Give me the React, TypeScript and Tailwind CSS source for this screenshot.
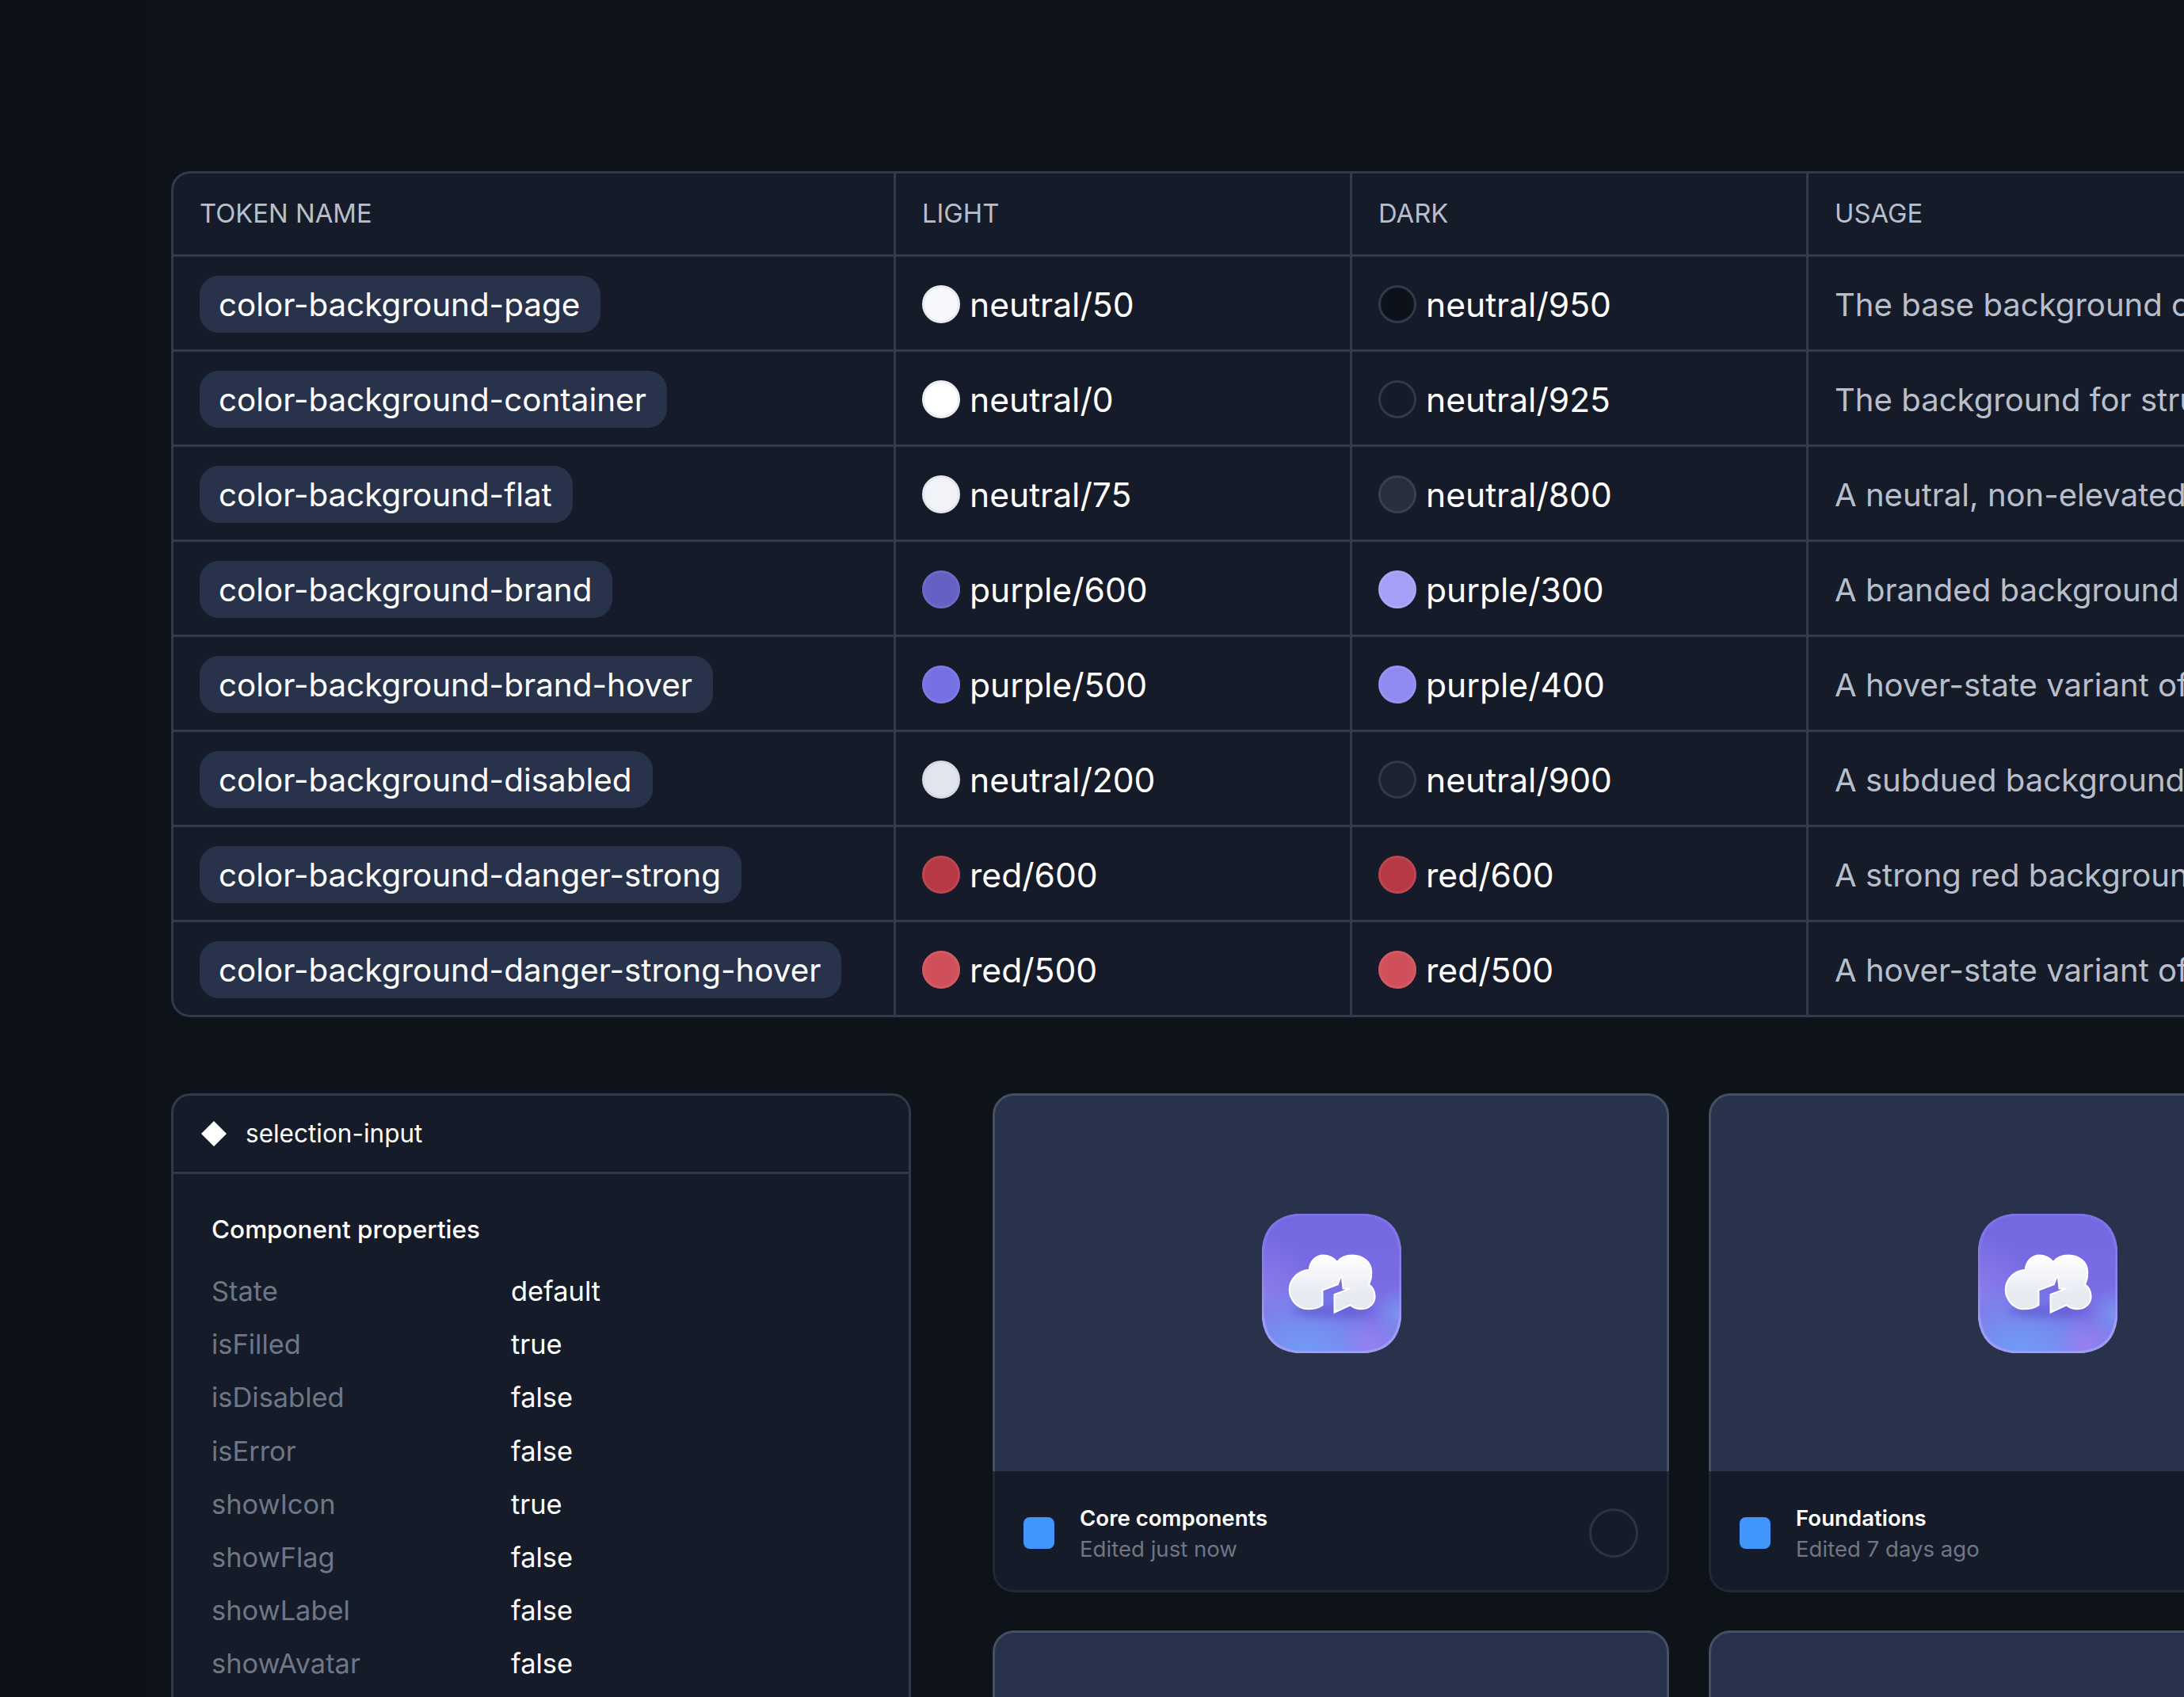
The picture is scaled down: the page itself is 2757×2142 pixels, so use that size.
import React from 'react';

const rows = [
  { token: 'color-background-page', light: 'neutral/50', lightClass: 'bg-[#f7f8fb] border-[#e9ebf1]', dark: 'neutral/950', darkClass: 'bg-[#0d1119] border-[#303a4b]', usage: 'The base background color of the page' },
  { token: 'color-background-container', light: 'neutral/0', lightClass: 'bg-white border-[#eceef3]', dark: 'neutral/925', darkClass: 'bg-[#151b28] border-[#303a4b]', usage: 'The background for structural containers' },
  { token: 'color-background-flat', light: 'neutral/75', lightClass: 'bg-[#f1f3f8] border-[#e4e7ee]', dark: 'neutral/800', darkClass: 'bg-[#272f3f] border-[#364052]', usage: 'A neutral, non-elevated surface color' },
  { token: 'color-background-brand', light: 'purple/600', lightClass: 'bg-[#6460c4] border-[#6e6ac9]', dark: 'purple/300', darkClass: 'bg-[#a3a0f5] border-[#a9a6f5]', usage: 'A branded background for emphasis' },
  { token: 'color-background-brand-hover', light: 'purple/500', lightClass: 'bg-[#7570e4] border-[#7e79e6]', dark: 'purple/400', darkClass: 'bg-[#8e8af0] border-[#9592f0]', usage: 'A hover-state variant of the brand' },
  { token: 'color-background-disabled', light: 'neutral/200', lightClass: 'bg-[#e2e5ed] border-[#d6dae3]', dark: 'neutral/900', darkClass: 'bg-[#1b2230] border-[#303a4b]', usage: 'A subdued background for disabled' },
  { token: 'color-background-danger-strong', light: 'red/600', lightClass: 'bg-[#b73945] border-[#bd4651]', dark: 'red/600', darkClass: 'bg-[#b73945] border-[#bd4651]', usage: 'A strong red background for danger' },
  { token: 'color-background-danger-strong-hover', light: 'red/500', lightClass: 'bg-[#cf4f5a] border-[#d25a64]', dark: 'red/500', darkClass: 'bg-[#cf4f5a] border-[#d25a64]', usage: 'A hover-state variant of the danger' },
];

const props = [
  ['State', 'default'],
  ['isFilled', 'true'],
  ['isDisabled', 'false'],
  ['isError', 'false'],
  ['showIcon', 'true'],
  ['showFlag', 'false'],
  ['showLabel', 'false'],
  ['showAvatar', 'false'],
];

function Swatch({ name, className }: { name: string; className: string }) {
  return (
    <div className="flex items-center gap-[12px] h-[48px]">
      <span className={`w-[48px] h-[48px] rounded-full border-[3px] ${className}`} />
      <span className="text-[42.6px] leading-[60px] pt-[2px] text-white">{name}</span>
    </div>
  );
}

function AppIcon({ id }: { id: string }) {
  const squircle = 'M260 96 L463 96 C568 96 622 150 622 256 L622 457 C622 563 568 617 463 617 L260 617 C155 617 101 563 101 457 L101 256 C101 150 155 96 260 96 Z';
  return (
    <svg viewBox="98 93 527 527" className="w-[176px] h-[176px]">
      <defs>
        <linearGradient id={`${id}-base`} x1="0" y1="0" x2="0" y2="1">
          <stop offset="0" stopColor="#7468e0" />
          <stop offset="0.7" stopColor="#7a6de5" />
          <stop offset="1" stopColor="#8088ee" />
        </linearGradient>
        <radialGradient id={`${id}-blue`} cx="0.3" cy="1" r="0.55">
          <stop offset="0" stopColor="#6f9cf5" stopOpacity="0.95" />
          <stop offset="1" stopColor="#6f9cf5" stopOpacity="0" />
        </radialGradient>
        <radialGradient id={`${id}-spot`} cx="0.78" cy="0.95" r="0.22">
          <stop offset="0" stopColor="#9a7df0" stopOpacity="0.9" />
          <stop offset="1" stopColor="#9a7df0" stopOpacity="0" />
        </radialGradient>
        <radialGradient id={`${id}-side`} cx="0.98" cy="0.72" r="0.2">
          <stop offset="0" stopColor="#7a96f0" stopOpacity="0.9" />
          <stop offset="1" stopColor="#7a96f0" stopOpacity="0" />
        </radialGradient>
        <radialGradient id={`${id}-left`} cx="0" cy="0.55" r="0.4">
          <stop offset="0" stopColor="#8f7eec" stopOpacity="0.8" />
          <stop offset="1" stopColor="#8f7eec" stopOpacity="0" />
        </radialGradient>
        <linearGradient id={`${id}-ring`} x1="0" y1="0" x2="0" y2="1">
          <stop offset="0" stopColor="#7c70e4" />
          <stop offset="0.45" stopColor="#8c80ee" />
          <stop offset="0.8" stopColor="#9d9cf5" />
          <stop offset="1" stopColor="#9d9cf5" />
        </linearGradient>
        <linearGradient id={`${id}-cloud`} x1="0" y1="0" x2="0" y2="1">
          <stop offset="0" stopColor="#ffffff" />
          <stop offset="0.7" stopColor="#e8eaf2" />
        </linearGradient>
        <filter id={`${id}-blur`} x="-30%" y="-50%" width="160%" height="200%">
          <feGaussianBlur stdDeviation="14" />
        </filter>
      </defs>
      <path d={squircle} fill={`url(#${id}-base)`} />
      <path d={squircle} fill={`url(#${id}-left)`} />
      <path d={squircle} fill={`url(#${id}-blue)`} />
      <path d={squircle} fill={`url(#${id}-spot)`} />
      <path d={squircle} fill={`url(#${id}-side)`} />
      <path d={squircle} fill="none" stroke={`url(#${id}-ring)`} strokeWidth="10" />
      <ellipse cx="362" cy="462" rx="150" ry="24" fill="#5b4fc8" opacity="0.5" filter={`url(#${id}-blur)`} />
      <path
        d="M327 438 L327 382 L385 360 L399 322 L405 376 L432 376 L372 398 L372 466 L432 438 C445 450 460 453 475 453 C505 453 525 430 525 405 C525 385 515 370 502 360 C510 345 512 335 512 315 C512 275 480 250 440 250 C415 250 395 258 382 275 C368 258 350 250 330 250 C300 250 278 275 277 305 C235 308 202 340 202 380 C202 420 235 453 270 453 C295 453 312 450 327 438 Z"
        fill={`url(#${id}-cloud)`}
        stroke="#ffffff"
        strokeWidth="6"
      />
    </svg>
  );
}

function FileCard({ id, title, edited, check }: { id: string; title: string; edited: string; check?: boolean }) {
  return (
    <div className="flex flex-col">
      <div className="h-[477px] bg-[#28324b] rounded-t-[27px] border-x-[3px] border-t-[3px] border-[#465064] flex items-center justify-center pl-[2px]">
        <AppIcon id={id} />
      </div>
      <div className="h-[153px] bg-[#151b28] rounded-b-[27px] border-x-[3px] border-b-[3px] border-[#212836] flex items-center pl-[36px] pr-[36px] pt-[6px]">
        <span className="w-[39px] h-[40px] rounded-[8px] bg-[#4296fb] shrink-0" />
        <div className="ml-[32px] flex flex-col flex-1">
          <span className="text-[27.6px] leading-[40px] font-semibold text-white">{title}</span>
          <span className="text-[27.6px] leading-[38px] text-[#6f7685]">{edited}</span>
        </div>
        {check && <span className="w-[62px] h-[62px] rounded-full border-[3px] border-[#2b3442]" />}
      </div>
    </div>
  );
}

export default function App() {
  return (
    <div className="w-[2757px] h-[2142px] overflow-hidden bg-gradient-to-r from-[#0b0f16] via-[#0e1219] via-10% to-[#0e1219] font-[Inter,sans-serif] pl-[216px] pt-[216px]">
      {/* token table */}
      <div className="w-[3000px] h-[1068px] bg-[#151b28] border-[3px] border-[#303a4b] rounded-[24px]">
        <div className="grid grid-cols-[909px_576px_576px_1fr] h-[105px] border-b-[3px] border-[#303a4b] text-[32.8px] leading-[48px] text-[#b8bfcb]">
          <div className="pl-[33px] pt-[26px]">TOKEN NAME</div>
          <div className="border-l-[3px] border-[#303a4b] pl-[33px] pt-[26px]">LIGHT</div>
          <div className="border-l-[3px] border-[#303a4b] pl-[33px] pt-[26px]">DARK</div>
          <div className="border-l-[3px] border-[#303a4b] pl-[33px] pt-[26px]">USAGE</div>
        </div>
        {rows.map((row, i) => (
          <div
            key={row.token}
            className={`grid grid-cols-[909px_576px_576px_1fr] ${i === rows.length - 1 ? 'h-[117px]' : 'h-[120px] border-b-[3px] border-[#303a4b]'}`}
          >
            <div className="pl-[33px] pt-[24px]">
              <span className="inline-block h-[72px] rounded-[24px] bg-[#28324b] pl-[24px] pr-[26px] pt-[7px] text-[40.4px] leading-[60px] text-white">{row.token}</span>
            </div>
            <div className="border-l-[3px] border-[#303a4b] pl-[33px] pt-[36px]">
              <Swatch name={row.light} className={row.lightClass} />
            </div>
            <div className="border-l-[3px] border-[#303a4b] pl-[33px] pt-[36px]">
              <Swatch name={row.dark} className={row.darkClass} />
            </div>
            <div className="border-l-[3px] border-[#303a4b] pl-[33px] pt-[31px] text-[40.1px] leading-[60px] text-[#b8bfcb] whitespace-nowrap">{row.usage}</div>
          </div>
        ))}
      </div>

      <div className="flex items-start mt-[96px]">
        {/* properties panel */}
        <div className="w-[934px] h-[900px] shrink-0 bg-[#151b28] border-[3px] border-[#303a4b] rounded-[24px]">
          <div className="h-[99px] border-b-[3px] border-[#303a4b] flex items-center pl-[35px]">
            <svg viewBox="0 0 32 32" className="w-[32px] h-[32px]">
              <path d="M16 0 L32 16 L16 32 L0 16 Z" fill="#ffffff" />
            </svg>
            <span className="ml-[24px] text-[31.5px] leading-[48px] text-white">selection-input</span>
          </div>
          <div className="pl-[48px] pt-[46px]">
            <div className="text-[31.5px] leading-[48px] font-medium text-white">Component properties</div>
            <div className="mt-[30px] flex flex-col gap-[19.2px]">
              {props.map(([label, value]) => (
                <div key={label} className="flex text-[34.4px] leading-[48px]">
                  <span className="w-[378px] text-[#6f7685]">{label}</span>
                  <span className="text-white">{value}</span>
                </div>
              ))}
            </div>
          </div>
        </div>

        {/* file cards */}
        <div className="ml-[103px] shrink-0 grid grid-cols-[854px_854px] gap-x-[50px] gap-y-[48px]">
          <FileCard id="a" title="Core components" edited="Edited just now" check />
          <FileCard id="b" title="Foundations" edited="Edited 7 days ago" />
          <FileCard id="c" title="Icons" edited="Edited 7 days ago" />
          <FileCard id="d" title="Patterns" edited="Edited 7 days ago" />
        </div>
      </div>
    </div>
  );
}
